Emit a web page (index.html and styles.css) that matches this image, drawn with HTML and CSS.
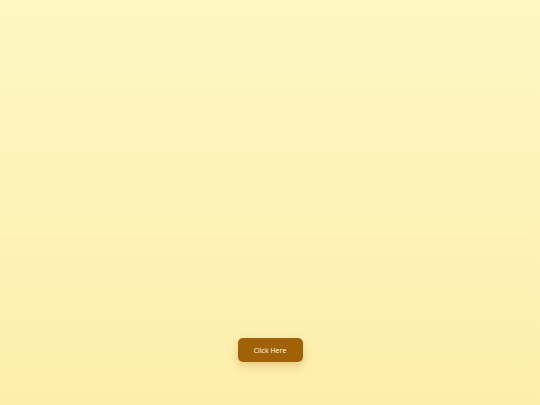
FILE: index.html
```html
<!DOCTYPE html>
<html>
<head>
<meta charset="utf-8">
<link rel="stylesheet" href="styles.css">
</head>
<body>
<main class="page">
  <button class="cta">Click Here</button>
</main>
</body>
</html>
```
FILE: styles.css
```css
html, body {
  margin: 0;
  padding: 0;
  height: 100%;
}
.page {
  box-sizing: border-box;
  height: 405px;
  width: 540px;
  background: linear-gradient(to bottom, #fef7c4, #fdeeab);
  display: flex;
  flex-direction: column;
  align-items: center;
  padding-top: 338px;
}
.cta {
  width: 65px;
  height: 24px;
  border: none;
  border-radius: 5px;
  background: #a16207;
  color: #fefce8;
  font-family: "Open Sans", sans-serif;
  font-size: 7px;
  font-weight: 500;
  padding: 0;
  box-shadow: 0 4px 8px rgba(161, 98, 7, 0.25);
}
```
